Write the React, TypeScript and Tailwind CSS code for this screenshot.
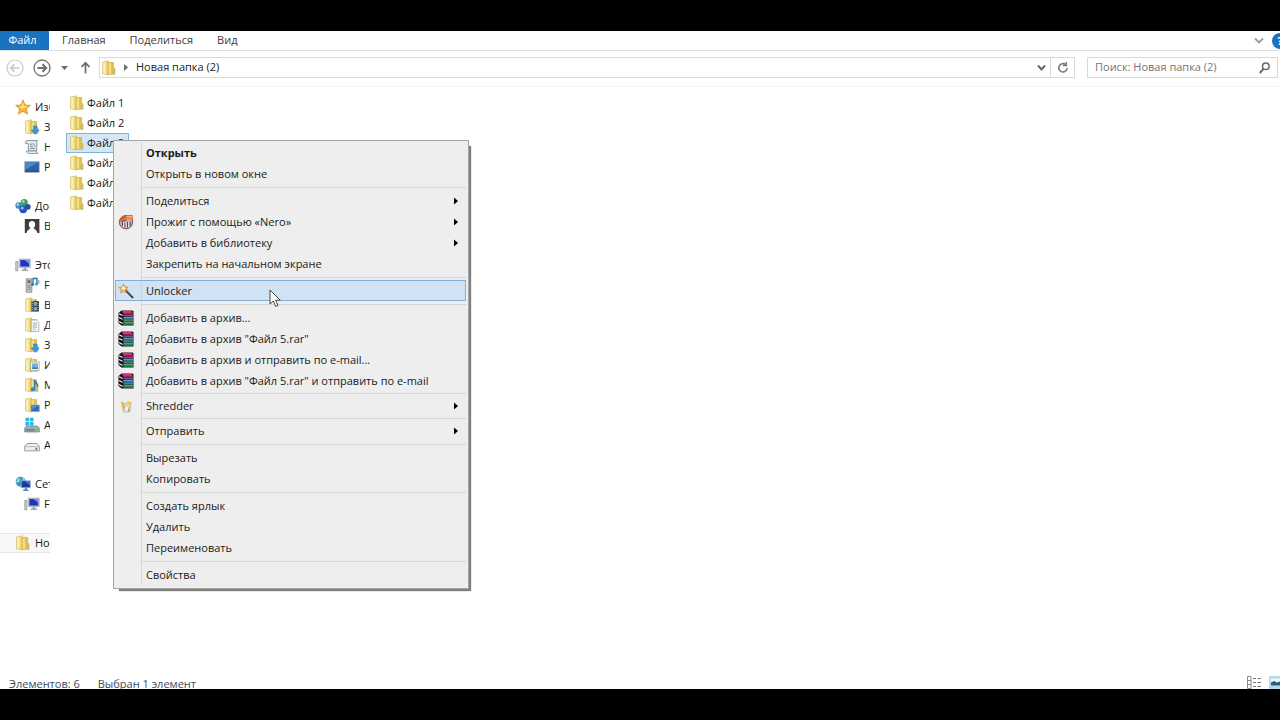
import type { ReactNode } from "react";

/* ---------- Icons ---------- */

function Svg({ children, size = 16 }: { children: ReactNode; size?: number }) {
  return (
    <svg width={size} height={size} viewBox="0 0 16 16" fill="none" className="shrink-0" aria-hidden="true">
      {children}
    </svg>
  );
}

function FolderShape() {
  return (
    <>
      <path d="M1.500 2 7.500.800V15L1.500 13.800Z" fill="#f0dc85" stroke="#d6b955" strokeWidth=".6" />
      <path d="M2.300 2.600 4.200 2.200V13.800L2.300 13.500Z" fill="#fbf2bd" />
      <path d="M6.800 2.600H12.600V8.300L14 8.800V14.300H6.800Z" fill="#dfc24f" stroke="#c6a640" strokeWidth=".6" />
      <path d="M7.600 3.200h2.500v10.500H7.600z" fill="#f3de82" />
      <path d="M11.500 10.200h2v3.500h-2z" fill="#bdbb95" />
    </>
  );
}

const FolderIcon = () => (
  <Svg>
    <FolderShape />
  </Svg>
);

const DownloadsIcon = () => (
  <Svg>
    <FolderShape />
    <path d="M9.600 7h3.200v4h2.400L11.200 15.400 7.200 11h2.400Z" fill="#3d9be0" stroke="#1f6fb5" strokeWidth=".6" />
  </Svg>
);

const VideoIcon = () => (
  <Svg>
    <FolderShape />
    <path d="M7.500 4h7.500v10.500H7.500z" fill="#31454f" />
    <path d="M9.600 5h3.400v3.700H9.600zM9.600 9.900h3.400v3.600H9.600z" fill="#7fa7b8" />
    <path d="M8.500 4v10.500M14.100 4v10.500" stroke="#c5d4da" strokeWidth=".7" strokeDasharray="1 1" />
  </Svg>
);

const DocumentsIcon = () => (
  <Svg>
    <FolderShape />
    <path d="M7.200 3h5.300l2.300 2v9.500H7.200z" fill="#fbfbfb" stroke="#9a9d9e" strokeWidth=".7" />
    <path d="M8.700 6.200h4.300M8.700 8.200h4.300M8.700 10.200h4.300M8.700 12.200h3" stroke="#8a98a4" strokeWidth=".8" />
  </Svg>
);

const PicturesIcon = () => (
  <Svg>
    <FolderShape />
    <path d="M6.500 5h8.800v8.300H6.500z" fill="#fff" stroke="#8f9fa9" strokeWidth=".7" />
    <path d="M7.800 6.300h6.200v5.700H7.800z" fill="#70b5dd" />
    <path d="m7.800 12 2.200-2.600 1.800 1.500 2.200-1.200V12Z" fill="#3d8190" />
  </Svg>
);

const MusicIcon = () => (
  <Svg>
    <FolderShape />
    <path d="M10.600 3v8.500" stroke="#2175b8" strokeWidth="1.500" />
    <path d="M10.600 3.500c.4 2.500 3.800 2.700 3.200 6.200" stroke="#2175b8" strokeWidth="1.500" />
    <ellipse cx="9" cy="12.300" rx="2.300" ry="2" fill="#2a8ad0" />
  </Svg>
);

const DesktopFolderIcon = () => (
  <Svg>
    <FolderShape />
    <path d="M7 8h8.400v6.600H7z" fill="#2f6bb0" stroke="#9ab3c9" strokeWidth=".7" />
    <path d="M7.600 8.600h7.200L7.600 12.800Z" fill="#568fcb" />
  </Svg>
);

const StarIcon = () => (
  <Svg>
    <path
      d="M8 .9 10 6l5.300.4-4 3.500 1.300 5.200L8 12.300l-4.600 2.800 1.300-5.200-4-3.500L6 6Z"
      fill="#f9b233"
      stroke="#d98b1c"
      strokeWidth=".8"
    />
    <path d="M8 3.200 9.200 7l3.400.4-2.800 1.800-3.600.2L4 7.200 6.800 7Z" fill="#fde07c" />
  </Svg>
);

const RecentIcon = () => (
  <Svg>
    <path d="M3 1.500h10.500c-1 .8-1 2-.6 3.400L12.600 12H4.400V4.600H1.500C1.200 3 1.800 1.800 3 1.500Z" fill="#e3e9ee" stroke="#7f8d98" strokeWidth=".9" />
    <path d="M2.500 12h9.600c0 1.400 1 2.400 2 2.400H5c-1.600 0-2.500-1-2.500-2.400Z" fill="#f3f5f6" stroke="#7f8d98" strokeWidth=".9" />
    <path d="M6 5.200h2M6 7.200h3M9 4.200l2.400 3.600M6 9.400h5" stroke="#6d8295" strokeWidth=".9" />
  </Svg>
);

const DesktopIcon = () => (
  <Svg>
    <path d="M.7 2.600h14.600v10.800H.7z" fill="#2c62a8" stroke="#a9b6c2" strokeWidth=".8" />
    <path d="M1.400 3.300h13.200L1.400 10.600Z" fill="#4b88cd" />
    <path d="M1.400 11.600h13.200v1.200H1.400z" fill="#274e80" />
  </Svg>
);

const HomegroupIcon = () => (
  <Svg>
    <circle cx="3.600" cy="7.500" r="3.200" fill="#3d8fc0" />
    <circle cx="9.200" cy="4.600" r="3.600" fill="#3ba55b" />
    <circle cx="12.800" cy="8.800" r="2.900" fill="#2b4f9e" />
    <circle cx="8.200" cy="11.300" r="3.900" fill="#2554bd" />
    <circle cx="2.800" cy="6.600" r="1.200" fill="#b7e3f3" />
    <circle cx="8.400" cy="3.500" r="1.300" fill="#a9e2b4" />
    <circle cx="7.200" cy="10.200" r="1.400" fill="#9dbcf2" />
  </Svg>
);

const UserIcon = () => (
  <Svg>
    <path d="M.8 1h14.600v14H.8z" fill="#3f3b3e" />
    <path d="M8 3c-2.200 0-3.200 1.600-3.200 3.400 0 1.600.7 2.800 1.600 3.500-.2 1.300-3.400 1.600-3.800 5.100h10.800c-.4-3.500-3.600-3.800-3.800-5.100.9-.7 1.600-1.900 1.600-3.500C11.200 4.600 10.200 3 8 3Z" fill="#fff" />
  </Svg>
);

const ComputerIcon = () => (
  <Svg>
    <path d="M.8 4.500h2v9.300h-2z" fill="#d8dadb" stroke="#7d8388" strokeWidth=".7" />
    <path d="M4.200 2h11.100v8.700H4.200z" fill="#c7ccd6" stroke="#969cab" strokeWidth=".6" />
    <path d="M5.300 3h8.900v6.600H5.300z" fill="#1f35b8" />
    <path d="M9.500 3h4.700v4Z" fill="#7089e8" />
    <path d="M8.600 10.900h2.600v1.600h2v1.400H6.600v-1.400h2z" fill="#a1a6ae" />
  </Svg>
);

const MediaIcon = () => (
  <Svg>
    <path d="M2.200 1.800h5.600v13.400H2.200z" fill="#c4c8cb" stroke="#7b8185" strokeWidth=".8" />
    <path d="M3.500 3.200H6.500v3H3.500z" fill="#63707a" />
    <path d="M3.600 8.300h2.800M3.600 10.300h2.800M3.600 12.300h2.800" stroke="#737b81" />
    <path d="M9 7.500V1.500h4v5" stroke="#2878a6" strokeWidth="1.300" />
    <circle cx="8.500" cy="7.500" r="1.500" fill="#2878a6" />
    <circle cx="12.500" cy="7" r="1.500" fill="#3c95c4" />
    <path d="M14.800 3v4" stroke="#58aed6" />
  </Svg>
);

const SystemDriveIcon = () => (
  <Svg>
    <path d="M1.500.8h3.600v3.500H1.500zM5.900.8h3.600v3.500H5.900zM1.500 5h3.600v3.500H1.500zM5.900 5h3.600v3.500H5.900z" fill="#28b4e3" />
    <path d="M2.500 9h11l1.800 2v4H.7v-4Z" fill="#a4afb5" stroke="#6f7b82" strokeWidth=".7" />
    <path d="M1.500 11.800h9v2.400h-9z" fill="#6c8d8d" />
    <circle cx="13" cy="13" r=".9" fill="#4fcb62" />
  </Svg>
);

const DriveIcon = () => (
  <Svg>
    <path d="M3 6.500h10l2.300 2.800v4.600H.7V9.300Z" fill="#eceeee" stroke="#85898c" strokeWidth=".8" />
    <path d="M1.200 9.600h13.600" stroke="#a5a9ab" strokeWidth=".7" />
    <path d="M11.500 10.800h1.600v2.200h-1.600z" fill="#69706d" />
  </Svg>
);

const NetworkIcon = () => (
  <Svg>
    <circle cx="5.700" cy="5.800" r="5" fill="#2c93bd" />
    <path d="M2 3.500C4 1 6 2.500 5 4.500S2.500 7 1.200 6.500ZM6.500 1.200c2 0 3 1.500 3.600 3l-2 .6Z" fill="#9bdbd2" />
    <path d="M6.200 4.800h9.200v7H6.200z" fill="#20379f" stroke="#a9b7cd" strokeWidth=".8" />
    <path d="M10 5.300h4.900v4Z" fill="#5876de" />
    <path d="M9.700 12.200h2.300v1.500h1.600V15H8.200v-1.300h1.500z" fill="#4387b8" />
  </Svg>
);

const NeroIcon = () => (
  <Svg>
    <circle cx="8" cy="8.200" r="6.700" fill="#c3b4b3" stroke="#6d595b" strokeWidth="1" />
    <path d="M1.500 7C3 1.500 8 .7 14.600 1l.4 6-2.500-2C9 3.600 5 4.500 3.400 8Z" fill="#db5a26" />
    <path d="M8 2.200c2.600-.8 4.500-.4 6-.3l.3 3.600C12.400 3.500 10.500 3.500 8 3.300Z" fill="#fbad55" />
    <path d="M4.500 11.800V8.500c0-2.200 2.500-2.600 4.500-2.500M7 13.500V8.500M9.500 13.500V8M12 12V7.500" stroke="#6e3c38" strokeWidth="1.100" />
    <path d="M5.700 8v5M8.200 8v5.500M10.700 7.500v5.500" stroke="#f5efec" strokeWidth=".9" />
  </Svg>
);

const WandIcon = () => (
  <Svg>
    <path d="m7 6.500 8 8.300" stroke="#2c2c3c" strokeWidth="1.900" />
    <path d="m8.500 7.500 5.800 6" stroke="#a79783" strokeWidth=".6" />
    <path d="M5.500.8 6.700 4l3.500.2-2.600 2.300.8 3.400-2.900-1.700-3 1.800.7-3.400L.7 4.300 4.200 4Z" fill="#f9b95a" stroke="#b97c34" strokeWidth=".6" />
    <path d="m5.500 2.600.8 2.200 2 .2-2.600 2-2.200-1.700Z" fill="#fff3c4" />
  </Svg>
);

const RarIcon = () => (
  <Svg>
    <path d="M3.500.5H14.500L15.500 1.500V15.500H3.500L.5 13V3Z" fill="#17121a" />
    <path d="M4 1H13.500L15 3.800H5.500Z" fill="#d0307a" />
    <path d="M5.500 3.800H15V5.300H5.500Z" fill="#8c1548" />
    <path d="M5.500 7H15V10H5.500Z" fill="#2d6ba0" />
    <path d="M5.500 7H15V8H5.500Z" fill="#5c96c2" />
    <path d="M5.500 11.800H15V14.800H5.500Z" fill="#1f8a4c" />
    <path d="M5.500 11.800H15V12.800H5.500Z" fill="#4db378" />
    <path d="M1 3.700 4.600 5.500M1 7.500 4.600 9.200M1 11.500 4.600 13.600" stroke="#f3eef2" strokeWidth="1.100" />
    <path d="M5.500 5.900H15M5.500 10.700H15" stroke="#d9d5da" strokeWidth=".6" />
  </Svg>
);

const ShredderIcon = () => (
  <Svg>
    <path d="m4 5.500 9-.3-1 8.600-6.500.4Z" fill="#dad9d6" stroke="#a8a6a2" strokeWidth=".6" />
    <path d="m2.800 3.500 3.400 1.300.8 4.500-2 3.200Z" fill="#e8b93f" />
    <path d="m9 3 4.800 1-.4 3.300L10 6.500Z" fill="#f1c74d" />
    <path d="m8 8.500 2.500 1.600L8 13Z" fill="#fdfdfb" />
    <path d="m11 7.500.6 5.500-1.600.8Z" fill="#c99637" />
  </Svg>
);

const SubmenuArrow = () => (
  <svg width="4" height="8" viewBox="0 0 4 8" className="mr-2 ml-auto shrink-0" aria-hidden="true">
    <path d="M0 .5 4 4 0 7.500Z" fill="#000" />
  </svg>
);

/* ---------- Data ---------- */

type NavItem = { label: string; icon: () => ReactNode };

const navGroups: { head: NavItem; selected?: boolean; items: NavItem[] }[] = [
  {
    head: { label: "Избранное", icon: StarIcon },
    items: [
      { label: "Загрузки", icon: DownloadsIcon },
      { label: "Недавние места", icon: RecentIcon },
      { label: "Рабочий стол", icon: DesktopIcon },
    ],
  },
  {
    head: { label: "Домашняя группа", icon: HomegroupIcon },
    items: [{ label: "В", icon: UserIcon }],
  },
  {
    head: { label: "Этот компьютер", icon: ComputerIcon },
    items: [
      { label: "F", icon: MediaIcon },
      { label: "Видео", icon: VideoIcon },
      { label: "Документы", icon: DocumentsIcon },
      { label: "Загрузки", icon: DownloadsIcon },
      { label: "Изображения", icon: PicturesIcon },
      { label: "Музыка", icon: MusicIcon },
      { label: "Рабочий стол", icon: DesktopFolderIcon },
      { label: "A", icon: SystemDriveIcon },
      { label: "A", icon: DriveIcon },
    ],
  },
  {
    head: { label: "Сеть", icon: NetworkIcon },
    items: [{ label: "F", icon: ComputerIcon }],
  },
  { head: { label: "Новая папка (2)", icon: FolderIcon }, selected: true, items: [] },
];

const files = ["Файл 1", "Файл 2", "Файл 3", "Файл 4", "Файл 5", "Файл 6"];

type MenuEntry =
  | { sep: "normal" | "tight" }
  | { label: string; icon?: () => ReactNode; bold?: boolean; submenu?: boolean; active?: boolean };

const menu: MenuEntry[] = [
  { label: "Открыть", bold: true },
  { label: "Открыть в новом окне" },
  { sep: "normal" },
  { label: "Поделиться", submenu: true },
  { label: "Прожиг с помощью «Nero»", icon: NeroIcon, submenu: true },
  { label: "Добавить в библиотеку", submenu: true },
  { label: "Закрепить на начальном экране" },
  { sep: "normal" },
  { label: "Unlocker", icon: WandIcon, active: true },
  { sep: "normal" },
  { label: "Добавить в архив...", icon: RarIcon },
  { label: 'Добавить в архив "Файл 5.rar"', icon: RarIcon },
  { label: "Добавить в архив и отправить по e-mail...", icon: RarIcon },
  { label: 'Добавить в архив "Файл 5.rar" и отправить по e-mail', icon: RarIcon },
  { sep: "tight" },
  { label: "Shredder", icon: ShredderIcon, submenu: true },
  { sep: "tight" },
  { label: "Отправить", submenu: true },
  { sep: "normal" },
  { label: "Вырезать" },
  { label: "Копировать" },
  { sep: "normal" },
  { label: "Создать ярлык" },
  { label: "Удалить" },
  { label: "Переименовать" },
  { sep: "normal" },
  { label: "Свойства" },
];

/* ---------- Window parts ---------- */

function Ribbon() {
  return (
    <nav className="flex h-5 shrink-0 items-stretch border-b border-[#dcdddf] text-[#3c3c3c]">
      <button className="w-[49px] bg-[#1a73c0] pr-1 text-white">Файл</button>
      <button className="ml-[13px]">Главная</button>
      <button className="ml-6">Поделиться</button>
      <button className="ml-6">Вид</button>
      <div className="ml-auto flex items-center overflow-hidden">
        <button aria-label="Свернуть ленту" className="mr-2">
          <svg width="10" height="8" viewBox="0 0 10 8" fill="none">
            <path d="m1 1.500 4 4 4-4" stroke="#9b9b9b" strokeWidth="1.800" />
          </svg>
        </button>
        <button aria-label="Справка" className="-mr-2 size-4 shrink-0 rounded-full bg-[#1a73c0] text-[11px] leading-4 font-bold text-white">
          ?
        </button>
      </div>
    </nav>
  );
}

function AddressBar() {
  return (
    <div className="flex h-9 shrink-0 items-center border-b border-[#f3f3f3] pr-0.5 pb-0.5 pl-1.5 text-[#222]">
      <button aria-label="Назад">
        <svg width="18" height="18" viewBox="0 0 18 18" fill="none" stroke="#c9c9c9">
          <circle cx="9" cy="9" r="8" strokeWidth="1.200" />
          <path d="M13.500 9H5M8.500 5.300 4.800 9l3.700 3.700" strokeWidth="1.700" />
        </svg>
      </button>
      <button aria-label="Вперёд" className="ml-[9px]">
        <svg width="18" height="18" viewBox="0 0 18 18" fill="none" stroke="#6f6f6f">
          <circle cx="9" cy="9" r="8" strokeWidth="1.300" />
          <path d="M4.500 9H13M9.500 5.300 13.200 9l-3.700 3.700" strokeWidth="2" />
        </svg>
      </button>
      <button aria-label="Последние расположения" className="ml-2.5">
        <svg width="7" height="4" viewBox="0 0 7 4">
          <path d="M0 0h7L3.500 4Z" fill="#6b6b6b" />
        </svg>
      </button>
      <button aria-label="Вверх" className="ml-3">
        <svg width="11" height="13" viewBox="0 0 11 13" fill="none" stroke="#6b6b6b" strokeWidth="1.700">
          <path d="M5.500 12.500V2M1.500 6l4-4.200 4 4.200" />
        </svg>
      </button>
      <div className="ml-2 flex h-[21px] flex-1 items-center border border-[#d9d9d9]">
        <span className="ml-px">
          <FolderIcon />
        </span>
        <svg width="4" height="7" viewBox="0 0 4 7" className="ml-[7px] shrink-0">
          <path d="M0 0 4 3.500 0 7Z" fill="#6b6b6b" />
        </svg>
        <button className="ml-2">Новая папка (2)</button>
        <button aria-label="Предыдущие расположения" className="mr-1 ml-auto">
          <svg width="9" height="8" viewBox="0 0 9 8" fill="none">
            <path d="m1 1.500 3.500 4L8 1.500" stroke="#666" strokeWidth="1.900" />
          </svg>
        </button>
        <button aria-label="Обновить" className="flex w-6 items-center justify-center self-stretch border-l border-[#d9d9d9]">
          <svg width="12" height="12" viewBox="0 0 12 12" fill="none" stroke="#777" strokeWidth="1.500">
            <path d="M8.800 2.700A4.200 4.200 0 1 0 10.200 6" />
            <path d="M9.300 0v3.500H5.800" />
          </svg>
        </button>
      </div>
      <label className="ml-3 flex h-[21px] w-[191px] items-center border border-[#d9d9d9] pr-[7px] pl-[7px]">
        <input
          type="text"
          aria-label="Поиск"
          placeholder="Поиск: Новая папка (2)"
          className="min-w-0 flex-1 bg-transparent outline-none placeholder:text-[#757575]"
        />
        <svg width="11" height="12" viewBox="0 0 11 12" fill="none" stroke="#666">
          <circle cx="6.800" cy="4.300" r="3.300" strokeWidth="1.500" />
          <path d="M4.500 6.800.8 11" strokeWidth="2" />
        </svg>
      </label>
    </div>
  );
}

function Sidebar() {
  return (
    <aside className="w-[50px] shrink-0 overflow-hidden pt-2.5 whitespace-nowrap">
      <div className="flex flex-col gap-[19px]">
        {navGroups.map(({ head, selected, items }) => (
          <div key={head.label}>
            <button
              className={`flex h-5 w-full items-center gap-1 overflow-hidden pl-[15px] ${
                selected ? "border-y border-[#e6e6e6] bg-[#f7f7f7]" : ""
              }`}
            >
              <head.icon />
              {head.label}
            </button>
            {items.map((item, i) => (
              <button key={i} className="flex h-5 w-full items-center gap-1 overflow-hidden pl-6">
                <item.icon />
                {item.label}
              </button>
            ))}
          </div>
        ))}
      </div>
    </aside>
  );
}

function FileList() {
  return (
    <main className="ml-4 flex-1 pt-1.5">
      <ul className="w-[63px]">
        {files.map((name) => (
          <li key={name}>
            <button
              className={`flex h-5 w-full items-center border pl-0.5 whitespace-nowrap ${
                name === "Файл 3" ? "border-[#7fb4dc] bg-[#d3e7f7]" : "border-transparent"
              }`}
            >
              <FolderIcon />
              <span className="ml-0.5">{name}</span>
            </button>
          </li>
        ))}
      </ul>
    </main>
  );
}

function ContextMenu() {
  return (
    <div
      role="menu"
      className="absolute top-[140px] left-[113px] w-[356px] border border-[#a5a5a5] bg-[#eee] pt-px pr-0.5 pb-[3px] pl-px shadow-[4px_4px_1px_-2px_#808080]"
    >
      {menu.map((entry, i) =>
        "sep" in entry ? (
          <div key={i} role="separator" className={`flex items-center ${entry.sep === "tight" ? "h-1" : "h-1.5"}`}>
            <span className="w-[27px] self-stretch border-r border-[#d8d8d8]" />
            <span className="h-px flex-1 bg-[#d5d5d5]" />
          </div>
        ) : (
          <button
            key={i}
            role="menuitem"
            className={`flex h-[21px] w-full items-center ${
              entry.active ? "bg-[#d1e2f2] outline -outline-offset-1 outline-[#7eb0da]" : ""
            } ${entry.bold ? "font-bold" : ""}`}
          >
            <span
              className={`flex w-[27px] items-center self-stretch border-r pl-[3px] ${
                entry.active ? "border-[#c2d7e9]" : "border-[#d8d8d8]"
              }`}
            >
              {entry.icon && <entry.icon />}
            </span>
            <span className="pt-px pl-1">{entry.label}</span>
            {entry.submenu && <SubmenuArrow />}
          </button>
        )
      )}
    </div>
  );
}

function StatusBar() {
  return (
    <footer className="flex h-4 shrink-0 items-start overflow-hidden pt-[3px] pl-[9px] leading-4 text-[#3b4a5a]">
      <span>Элементов: 6</span>
      <span className="ml-[18px]">Выбран 1 элемент</span>
      <div className="ml-auto flex gap-2">
        <button aria-label="Таблица">
          <svg width="14" height="13" viewBox="0 0 14 13" fill="none">
            <path d="M.5.500h3.500v12H.5zM.5 4.500H4M.5 8.500H4" stroke="#8a8a8a" />
            <path d="M6 2.500h3M10.500 2.500H14M6 6.500h3M10.500 6.500H14M6 10.500h3M10.500 10.500H14" stroke="#777" />
          </svg>
        </button>
        <button aria-label="Крупные значки">
          <svg width="11" height="13" viewBox="0 0 11 13">
            <path d="M0 0h11v13H0z" fill="#b4dcec" />
            <path d="M2 2.500h9v7H2z" fill="#eaf7fb" />
            <path d="M2 6.500 5 5l3 1.500 3-1v4H2z" fill="#2a5d78" />
          </svg>
        </button>
      </div>
    </footer>
  );
}

export default function App() {
  return (
    <div className="relative flex h-screen flex-col overflow-hidden bg-black py-[31px] font-['Open_Sans','Noto_Sans',sans-serif] text-[11px] text-[#1a1a1a]">
      <div className="flex min-h-0 flex-1 flex-col overflow-hidden bg-white">
        <Ribbon />
        <AddressBar />
        <div className="flex min-h-0 flex-1">
          <Sidebar />
          <FileList />
        </div>
        <StatusBar />
      </div>

      <ContextMenu />

      {/* Mouse pointer */}
      <svg width="13" height="19" viewBox="0 0 13 19" className="absolute top-[289px] left-[269px]" aria-hidden="true">
        <path d="M1 1v14l3.300-3 2.400 5.500 2.300-1-2.400-5.300h4.600Z" fill="#fff" stroke="#444" strokeWidth="1" />
      </svg>
    </div>
  );
}
